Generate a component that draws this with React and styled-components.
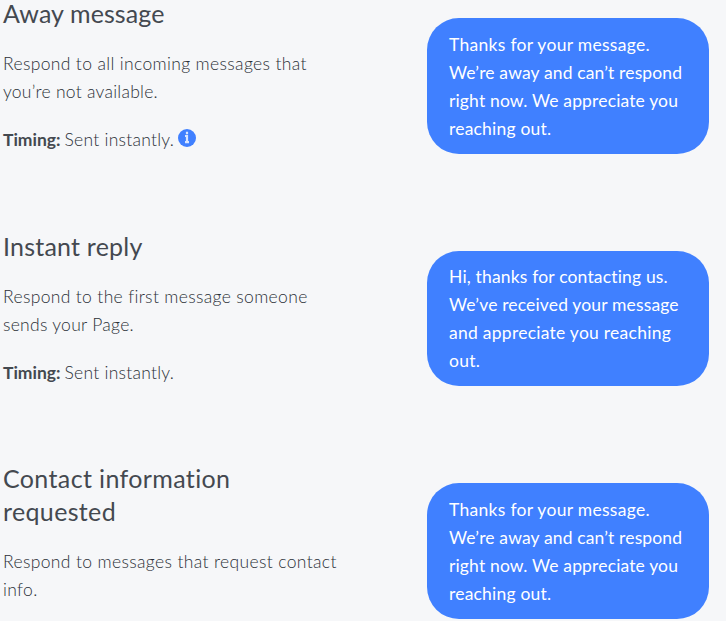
import React from 'react'
import styled, { createGlobalStyle } from 'styled-components'

const awayReply = [
   { text: 'Thanks for your message.', spacing: 0.29 },
   { text: 'We’re away and can’t respond', spacing: 0.14 },
   { text: 'right now. We appreciate you', spacing: 0.15 },
   { text: 'reaching out.', spacing: 0.2 },
]

const replies = [
   {
      id: 'away',
      title: [{ text: 'Away message', spacing: 0.1 }],
      description: [
         { text: 'Respond to all incoming messages that', spacing: 0.35 },
         { text: 'you’re not available.', spacing: 0.26 },
      ],
      timing: 'Sent instantly.',
      hasInfo: true,
      bubble: awayReply,
   },
   {
      id: 'instant',
      title: [{ text: 'Instant reply', spacing: 0.22 }],
      description: [
         { text: 'Respond to the first message someone', spacing: 0.34 },
         { text: 'sends your Page.', spacing: 0.28 },
      ],
      timing: 'Sent instantly.',
      bubble: [
         { text: 'Hi, thanks for contacting us.', spacing: 0.17 },
         { text: 'We’ve received your message', spacing: 0.15 },
         { text: 'and appreciate you reaching', spacing: 0.26 },
         { text: 'out.', spacing: 0.25 },
      ],
   },
   {
      id: 'contact',
      title: [
         { text: 'Contact information', spacing: 0.37 },
         { text: 'requested', spacing: 0.35 },
      ],
      description: [
         { text: 'Respond to messages that request contact', spacing: 0.36 },
         { text: 'info.', spacing: 0.35 },
      ],
      bubble: awayReply,
   },
]

const Lines = ({ lines }) =>
   lines.map(({ text, spacing }) => (
      <Line key={text} $spacing={spacing}>
         {text}
      </Line>
   ))

const InfoIcon = () => (
   <InfoSvg viewBox="0 0 18 18">
      <circle cx="9" cy="9" r="9" fill="#4080ff" />
      <path
         d="M9 2.8v2.4M7 7h2v6M7 13.2h4"
         fill="none"
         stroke="#d9e6ff"
         strokeWidth="2.2"
      />
   </InfoSvg>
)

const ReplyCard = ({ title, description, timing, hasInfo, bubble }) => (
   <Card>
      <Info>
         <Title>
            <Lines lines={title} />
         </Title>
         <Description>
            <Lines lines={description} />
         </Description>
         {timing && (
            <Timing>
               <TimingLabel>Timing:</TimingLabel>
               <TimingValue>{timing}</TimingValue>
               {hasInfo && <InfoIcon />}
            </Timing>
         )}
      </Info>
      <Bubble>
         <Lines lines={bubble} />
      </Bubble>
   </Card>
)

const App = () => (
   <>
      <GlobalStyle />
      <Page>
         {replies.map(({ id, ...reply }) => (
            <ReplyCard key={id} {...reply} />
         ))}
      </Page>
   </>
)
export default App

const GlobalStyle = createGlobalStyle`
   * {
      box-sizing: border-box;
   }
   body {
      margin: 0;
      background: #f6f7f9;
      font-family: Lato, 'Open Sans', sans-serif;
      font-variant-ligatures: none;
      color: #444950;
   }
`
const Page = styled.main`
   display: grid;
   grid-template-rows: 232.5px 232.5px 156px;
   background: #f6f7f9;
`
const Card = styled.section`
   display: flex;
   justify-content: space-between;
   align-items: flex-start;
   padding: 0 17px 0 3px;
`
const Info = styled.div``

const Title = styled.h2`
   display: grid;
   gap: 6px;
   margin: 0 0 23px;
   font-weight: 400;
   font-size: 25px;
   line-height: 27px;
`
const Description = styled.p`
   margin: 0 0 20px;
   color: #2b3037;
   font-size: 17.5px;
   font-weight: 300;
   line-height: 28px;
`
const Timing = styled.div`
   display: flex;
   align-items: center;
   height: 28px;
   color: #2b3037;
   font-size: 17.5px;
   font-weight: 300;
   line-height: 28px;
`
const TimingLabel = styled.strong`
   font-weight: 700;
   color: #444950;
`
const TimingValue = styled.span`
   margin-left: 4px;
   letter-spacing: 0.25px;
`
const Bubble = styled.div`
   width: 282px;
   height: 135.5px;
   margin-top: 18px;
   padding: 12.5px 22px 11px;
   border-radius: 32px;
   background: #4080ff;
   color: #fff;
   font-size: 17.5px;
   line-height: 28px;
`
const Line = styled.span`
   display: block;
   width: max-content;
   white-space: nowrap;
   letter-spacing: ${({ $spacing = 0 }) => $spacing}px;
`
const InfoSvg = styled.svg`
   width: 18px;
   height: 18px;
   margin: -5px 0 0 4px;
`
